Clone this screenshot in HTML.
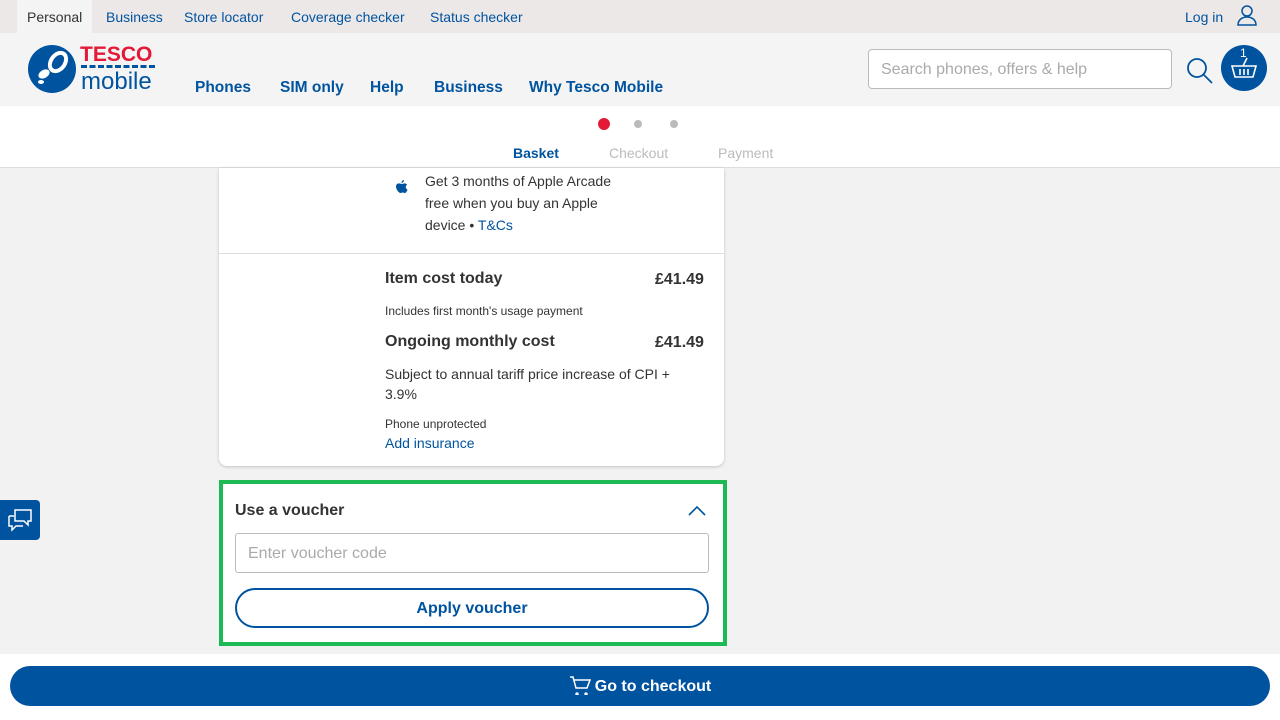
<!DOCTYPE html>
<html><head><style>
*{box-sizing:border-box;margin:0;padding:0}
body{width:1280px;height:720px;overflow:hidden;background:#f2f2f2;font-family:"Liberation Sans",sans-serif;position:relative;color:#333}
.abs{position:absolute}
.top{left:0;top:0;width:1280px;height:33px;background:#ece8e8}
.top span{position:absolute;top:9px;font-size:14px;color:#00539f}
.hdr{left:0;top:33px;width:1280px;height:73px;background:#f5f4f4}
.nav{position:absolute;top:79px;font-size:15.5px;font-weight:bold;color:#00539f}
.steps{left:0;top:106px;width:1280px;height:62px;background:#fff;border-bottom:1px solid #ddd}
.card{left:219px;top:168px;width:505px;height:298px;background:#fff;border-radius:0 0 8px 8px;box-shadow:0 1px 3px rgba(0,0,0,.2)}
.t{position:absolute;font-size:14px;color:#333}
.b{font-weight:bold;font-size:16px}
a{color:#00539f;text-decoration:none}
</style></head><body>
<div class="abs top">
<div class="abs" style="left:17px;top:0;width:75px;height:33px;background:#f5f4f4"></div>
<span style="left:27px;color:#333">Personal</span><span style="left:106px">Business</span><span style="left:184px">Store locator</span><span style="left:291px">Coverage checker</span><span style="left:430px">Status checker</span><span style="left:1185px">Log in</span>
<svg class="abs" style="left:1236px;top:4px" width="22" height="22" viewBox="0 0 22 22" fill="none" stroke="#00539f" stroke-width="1.5"><circle cx="11" cy="7" r="5"/><path d="M2 21c0-5 4-8 9-8s9 3 9 8z"/></svg>
</div>
<div class="abs hdr">
<svg class="abs" style="left:27px;top:11px" width="50" height="50" viewBox="0 0 50 50"><circle cx="25" cy="25" r="24" fill="#00539f"/><ellipse cx="31" cy="18" rx="9" ry="12" fill="#fff" transform="rotate(35 31 18)"/><ellipse cx="31" cy="18" rx="5" ry="8" fill="#00539f" transform="rotate(35 31 18)"/><ellipse cx="17" cy="30" rx="6" ry="4" fill="#fff" transform="rotate(-30 17 30)"/><ellipse cx="14" cy="38" rx="3" ry="2" fill="#fff"/></svg>
<div class="abs" style="left:80px;top:10px;font-size:21px;font-weight:bold;color:#e31937">TESCO</div>
<div class="abs" style="left:81px;top:32px;width:74px;height:3px;border-top:3px dashed #00539f"></div>
<div class="abs" style="left:81px;top:35px;font-size:24px;color:#00539f">mobile</div>
<div class="abs" style="left:868px;top:16px;width:304px;height:40px;background:#fff;border:1px solid #bbb;border-radius:4px;padding:11px 12px;font-size:16px;color:#aaa">Search phones, offers &amp; help</div>
<svg class="abs" style="left:1186px;top:24px" width="28" height="28" viewBox="0 0 28 28" fill="none" stroke="#00539f" stroke-width="1.8"><circle cx="11" cy="11" r="9"/><path d="M17.5 17.5L26 26"/></svg>
<div class="abs" style="left:1221px;top:12px;width:46px;height:46px;border-radius:50%;background:#00539f"></div>
<div class="abs" style="left:1240px;top:13px;color:#fff;font-size:12px">1</div>
<svg class="abs" style="left:1231px;top:22px" width="26" height="26" viewBox="0 0 26 26" fill="none" stroke="#fff" stroke-width="1.6"><path d="M1 11h24l-3 11H4z M16 3l-4 8 M9 14v6 M13 14v6 M17 14v6"/></svg>
</div>
<span class="nav" style="left:195px">Phones</span><span class="nav" style="left:280px">SIM only</span><span class="nav" style="left:370px">Help</span><span class="nav" style="left:434px">Business</span><span class="nav" style="left:529px">Why Tesco Mobile</span>
<div class="abs steps">
<div class="abs" style="left:598px;top:12px;width:12px;height:12px;border-radius:50%;background:#e31937"></div>
<div class="abs" style="left:634px;top:14px;width:8px;height:8px;border-radius:50%;background:#bbb"></div>
<div class="abs" style="left:670px;top:14px;width:8px;height:8px;border-radius:50%;background:#bbb"></div>
<div class="t" style="left:513px;top:39px;font-weight:bold;color:#00539f">Basket</div>
<div class="t" style="left:609px;top:39px;color:#bbb">Checkout</div>
<div class="t" style="left:718px;top:39px;color:#bbb">Payment</div>
</div>
<div class="abs card">
<svg class="abs" style="left:177px;top:12px" width="12" height="14" viewBox="0 0 12 14" fill="#00539f"><path d="M8 0c0 1.5-1 2.8-2.5 3C5.4 1.5 6.5.2 8 0zM6 4c1 0 1.8-.6 2.6-.6 1 0 2 .5 2.5 1.4-2 1.2-1.6 4 .4 4.8-.5 1.5-1.5 3.4-2.6 3.4-.9 0-1.2-.5-2.2-.5-1.1 0-1.4.5-2.3.5C3 13 0 9.5 0 6.5 0 4.5 1.4 3.4 2.9 3.4 4 3.4 5 4 6 4z"/></svg>
<div class="t" style="left:206px;top:2px;line-height:22px">Get 3 months of Apple Arcade<br>free when you buy an Apple<br>device • <a>T&amp;Cs</a></div>
<div class="abs" style="left:0;top:85px;width:505px;border-top:1px solid #ddd"></div>
<div class="t b" style="left:166px;top:102px">Item cost today</div><div class="t b" style="left:436px;top:103px">£41.49</div>
<div class="t" style="left:166px;top:136px;font-size:12px">Includes first month's usage payment</div>
<div class="t b" style="left:166px;top:165px">Ongoing monthly cost</div><div class="t b" style="left:436px;top:166px">£41.49</div>
<div class="t" style="left:166px;top:196px;line-height:20px">Subject to annual tariff price increase of CPI +<br>3.9%</div>
<div class="t" style="left:166px;top:249px;font-size:12px">Phone unprotected</div>
<div class="t" style="left:166px;top:267px"><a>Add insurance</a></div>
</div>
<div class="abs" style="left:0;top:500px;width:40px;height:40px;background:#00539f;border-radius:0 4px 4px 0"></div>
<svg class="abs" style="left:7px;top:508px" width="26" height="24" viewBox="0 0 26 24" fill="none" stroke="#fff" stroke-width="1.5"><path d="M8 2h16v11h-3v4l-4-4H8z M2 8h5 M2 8v10h3v4l4-4h7"/></svg>
<div class="abs" style="left:219px;top:480px;width:508px;height:166px;border:4px solid #1db954;background:#fff"></div>
<div class="t b" style="left:235px;top:502px">Use a voucher</div>
<svg class="abs" style="left:688px;top:505px" width="18" height="12" viewBox="0 0 18 12" fill="none" stroke="#00539f" stroke-width="1.6"><path d="M1 10l8-8 8 8"/></svg>
<div class="abs" style="left:235px;top:533px;width:474px;height:40px;border:1px solid #bbb;border-radius:3px;padding:11px 12px;font-size:16px;color:#aaa">Enter voucher code</div>
<div class="abs" style="left:235px;top:588px;width:474px;height:40px;border:2px solid #00539f;border-radius:20px;text-align:center;line-height:38px;font-size:16px;font-weight:bold;color:#00539f">Apply voucher</div>
<div class="abs" style="left:0;top:654px;width:1280px;height:66px;background:#fff"></div>
<div class="abs" style="left:10px;top:666px;width:1260px;height:40px;background:#00539f;border-radius:20px;color:#fff;text-align:center;line-height:41px;font-size:16px;font-weight:bold">
<svg style="vertical-align:-4px;margin-right:4px" width="22" height="20" viewBox="0 0 22 20" fill="none" stroke="#fff" stroke-width="1.5"><path d="M1 2h3l3 11h11l3-8H5 M8 18a1 1 0 1 0 .1 0 M17 18a1 1 0 1 0 .1 0"/></svg>Go to checkout</div>
</body></html>
